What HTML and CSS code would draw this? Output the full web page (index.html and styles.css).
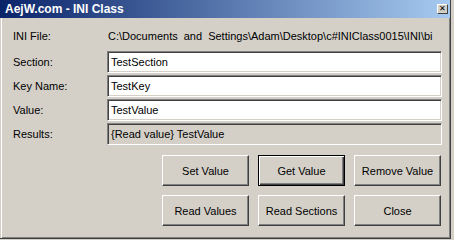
FILE: index.html
```html
<!DOCTYPE html>
<html lang="en">
	<head>
		<meta charset="utf-8">
		<title>AejW.com - INI Class</title>
		<link rel="stylesheet" href="styles.css">
	</head>
	<body>
		<div class="window">
			<div class="titlebar">
				<span class="title">AejW.com - INI Class</span>
				<span class="close">&#x2715;</span>
			</div>
			<div class="body">
				<div class="fields">
					<label class="first">INI File:</label>
					<div class="path first">C:\Documents and Settings\Adam\Desktop\c#INIClass0015\INI\bi</div>
					<label for="section">Section:</label>
					<input id="section" class="box" type="text" value="TestSection">
					<label for="key">Key Name:</label>
					<input id="key" class="box" type="text" value="TestKey">
					<label for="val">Value:</label>
					<input id="val" class="box" type="text" value="TestValue">
					<label>Results:</label>
					<div class="box result">{Read value} TestValue</div>
				</div>
				<div class="buttons">
					<button class="butt">Set Value</button>
					<button class="butt default">Get Value</button>
					<button class="butt">Remove Value</button>
					<button class="butt">Read Values</button>
					<button class="butt">Read Sections</button>
					<button class="butt">Close</button>
				</div>
			</div>
		</div>
	</body>
</html>
```

FILE: styles.css
```css
body {
	margin: 0;
	background-color: #D4D0C8;
	font-family: "Liberation Sans", Arial, sans-serif;
	font-size: 11px;
	color: #000000;
}

.window {
	box-sizing: border-box;
	width: 451px;
	height: 239px;
	background-color: #D4D0C8;
	border-right: 1px solid #404040;
	border-bottom: 1px solid #404040;
	box-shadow: inset 1px 0 #D4D0C8, inset 2px 0 #FFFFFF, inset -1px -1px #808080;
}

.titlebar {
	height: 18px;
	display: flex;
	align-items: center;
	justify-content: space-between;
	padding: 0 2px 0 5px;
	background: linear-gradient(to right, #0A246A, #A6CAF0);
}

.title {
	color: #FFFFFF;
	font-weight: bold;
	font-size: 12px;
}

.close {
	box-sizing: border-box;
	width: 11px;
	height: 10px;
	font-size: 8px;
	line-height: 8px;
	text-align: center;
	background-color: #D4D0C8;
	border: 1px solid;
	border-color: #FFFFFF #404040 #404040 #FFFFFF;
}

.body {
	padding: 9px 8px 0 13px;
}

.fields {
	display: grid;
	grid-template-columns: 94px 335px;
	grid-auto-rows: 22px;
	row-gap: 2px;
	align-items: center;
}

.first {
	margin-bottom: 4px;
}

.path {
	padding-left: 1px;
	white-space: nowrap;
	word-spacing: 3px;
}

.box {
	box-sizing: border-box;
	height: 22px;
	width: 100%;
	margin: 0;
	padding: 0 3px;
	font: inherit;
	background-color: #FFFFFF;
	border: 1px solid;
	border-color: #808080 #FFFFFF #FFFFFF #808080;
	box-shadow: inset 1px 1px #404040, inset -1px -1px #D4D0C8;
	outline: none;
}

.result {
	display: flex;
	align-items: center;
	background-color: #D4D0C8;
}

.buttons {
	display: grid;
	grid-template-columns: repeat(3, 87px);
	grid-auto-rows: 31px;
	gap: 9px;
	justify-content: end;
	padding-right: 1px;
	margin-top: 10px;
}

.butt {
	font: inherit;
	color: #000000;
	background-color: #D4D0C8;
	border: 1px solid;
	border-color: #FFFFFF #404040 #404040 #FFFFFF;
	box-shadow: inset -1px -1px #808080;
	padding: 0;
}

.default {
	border: 1px solid #000000;
	box-shadow: inset 1px 1px #FFFFFF, inset -1px -1px #404040, inset -2px -2px #808080;
}
```
